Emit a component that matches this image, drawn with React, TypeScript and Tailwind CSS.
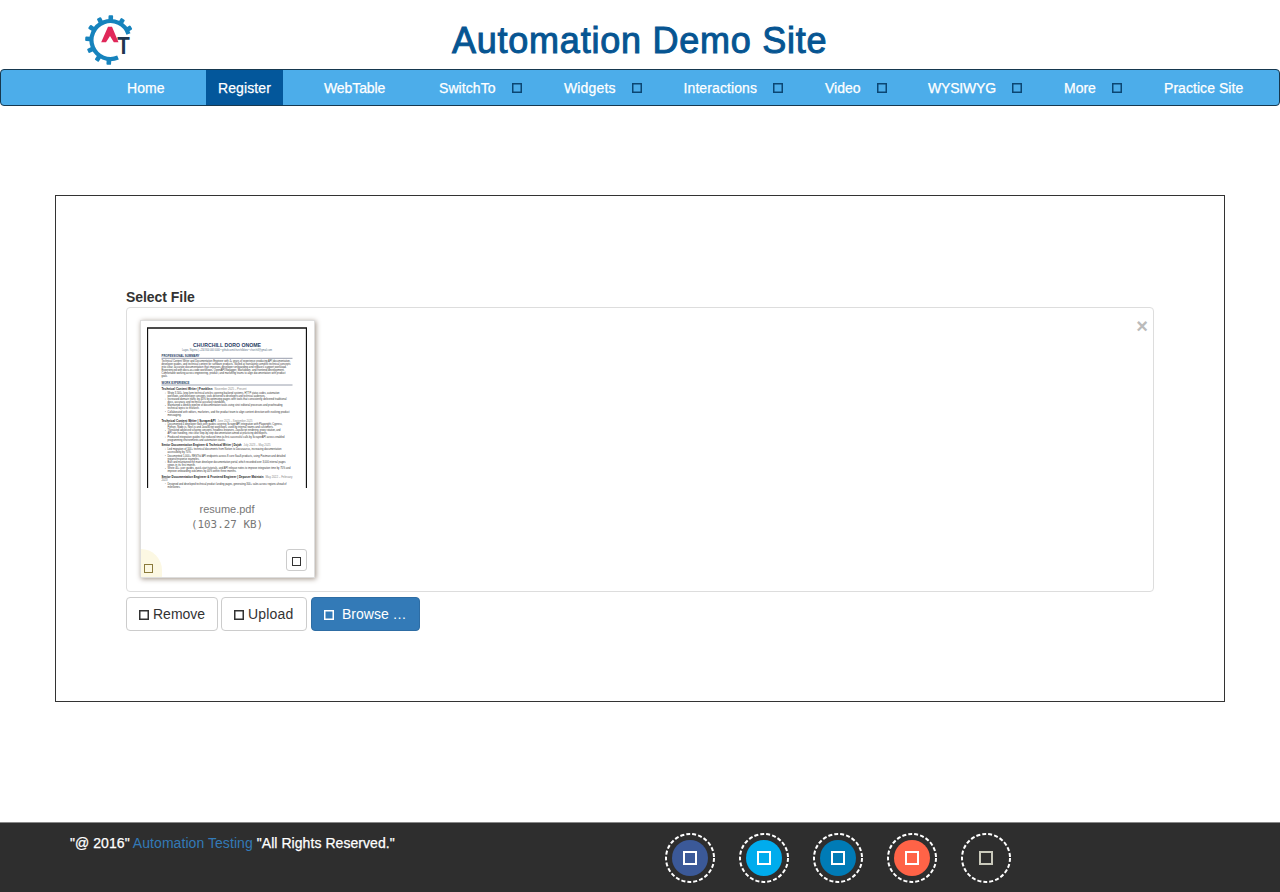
const square = 'inline-block shrink-0 border';

type NavItem = { label: string; width: string; spacing: string; menu?: boolean };

const navItems: NavItem[] = [
  { label: 'WebTable', width: 'w-[115px]', spacing: 'tracking-[-0.1px]' },
  { label: 'SwitchTo', width: 'w-[125px]', spacing: 'tracking-[0.08px]', menu: true },
  { label: 'Widgets', width: 'w-[119.5px]', spacing: 'tracking-[0.15px]', menu: true },
  { label: 'Interactions', width: 'w-[141.5px]', spacing: 'tracking-[0.1px]', menu: true },
  { label: 'Video', width: 'w-[103px]', spacing: 'tracking-[0px]', menu: true },
  { label: 'WYSIWYG', width: 'w-[136px]', spacing: 'tracking-[-0.2px]', menu: true },
  { label: 'More', width: 'w-[100px]', spacing: 'tracking-[0px]', menu: true },
  { label: 'Practice Site', width: 'w-[90px]', spacing: 'tracking-[0.05px]' },
];

const socials = ['bg-[#3b5998]', 'bg-[#00aced]', 'bg-[#007bb6]', 'bg-[#ff6347]', 'bg-transparent'];

function Logo() {
  const teeth = [-58, -31, -88, -117, -147, -177, -207, -237, -267];
  return (
    <svg width="52" height="54" viewBox="84 13 52 54" className="block">
      <path d="M128.5 34 A19 19 0 1 0 118 57.5" fill="none" stroke="#1683bd" strokeWidth="4.2" />
      {teeth.map((a) => (
        <rect key={a} x="19" y="-2.3" width="5.8" height="4.6" rx="1" fill="#1683bd" transform={`translate(110 40) rotate(${a})`} />
      ))}
      <path d="M101.2 42.3 L108 26.8 H112 L118.5 42.3 H113.8 L110 36 L106 42.3 Z" fill="#e0285a" />
      <text x="117.3" y="54.3" fontSize="23.5" fontWeight="700" fontFamily="Liberation Sans, sans-serif" fill="#20364f" textLength="12.5" lengthAdjust="spacingAndGlyphs">T</text>
    </svg>
  );
}

type Line = [y: number, x: number, w: number, text: string];

const body: Line[] = [
  [362, 161.5, 129, 'Technical Content Writer and Documentation Engineer with 4+ years of experience producing API documentation,'],
  [365, 161.5, 129, 'developer guides, and technical content for software products. Skilled at translating complex technical concepts'],
  [368, 161.5, 125, 'into clear, accurate documentation that improves developer onboarding and reduces support workload.'],
  [371, 161.5, 123, 'Experienced with docs-as-code workflows, OpenAPI/Swagger, Markdown, and frontend development.'],
  [374, 161.5, 124, 'Comfortable working across engineering, product, and marketing teams to align documentation with product'],
  [377, 161.5, 6, 'goals.'],
  [394, 167.5, 112, 'Wrote 3,500+ long-form technical articles covering backend systems, HTTP status codes, automation'],
  [397, 167.5, 98, 'workflows, and developer concepts, tools delivered to developers and technical audiences.'],
  [400, 167.5, 119, 'Increased domain traffic by 40% by optimizing pages with tools that consistently delivered traditional'],
  [403, 167.5, 58, 'docs, accuracy, and technical accuracy standards.'],
  [406.3, 167.5, 115, 'Maintained a weekly pipeline of documentation tasks using strict editorial processes and proofreading'],
  [409.3, 167.5, 32, 'technical topics to research.'],
  [412.7, 167.5, 122, 'Collaborated with editors, marketers, and the product team to align content direction with evolving product'],
  [415.7, 167.5, 14, 'messaging.'],
  [425, 167.5, 115, 'Documented 4 developer tools with guides covering ScraperAPI integration with Playwright, Cypress,'],
  [428, 167.5, 106, 'Python, Node.js, Next.js and JavaScript workflows, used by internal teams and customers.'],
  [431.3, 167.5, 113, 'Translated advanced scraping concepts, headless browsers, JavaScript rendering, proxy rotation, and'],
  [434.3, 167.5, 100, 'API rate handling, into clear step-by-step documentation aimed at practicing developers.'],
  [438, 167.5, 117, 'Produced integration guides that reduced time-to-first-successful calls by ScraperAPI across enabled'],
  [441, 167.5, 58, 'programming environments and automation stacks.'],
  [450, 167.5, 114, 'Led migration of 100+ technical documents from Notion to Docusaurus, increasing documentation'],
  [453, 167.5, 24, 'accessibility by 70%.'],
  [456.7, 167.5, 118, 'Documented 1,000+ RESTful API endpoints across 8 core SaaS products, using Postman and detailed'],
  [459.7, 167.5, 32, 'request/response examples.'],
  [463, 167.5, 118, 'Built and maintained the main developer documentation portal, which recorded over 3,000 internal pages'],
  [466, 167.5, 28, 'views in its first month.'],
  [469.3, 167.5, 123, 'Wrote 40+ user guides, quick-start tutorials, and API release notes to improve integration time by 75% and'],
  [472.3, 167.5, 69, 'improve onboarding outcomes by 40% within three months.'],
  [484.5, 167.5, 119, 'Designed and developed technical product landing pages, generating 300+ sales across regions ahead of'],
  [487.5, 167.5, 13, 'milestones.'],
];

const jobs: [number, number, string, number, string][] = [
  [390, 51, 'Technical Content Writer  |  Franklinn', 32, 'November 2025 – Present'],
  [421.5, 54, 'Technical Content Writer  |  ScraperAPI', 35, 'June 2025 – September 2025'],
  [446.3, 80, 'Senior Documentation Engineer & Technical Writer  |  Dojah', 27, 'July 2023 – May 2025'],
  [478, 102, 'Senior Documentation Engineer & Frontend Engineer  |  Deposer Maintain', 27, 'May 2022 – February'],
];

const bullets = [394, 400, 406.3, 412.7, 425, 431.3, 438, 450, 456.7, 463, 469.3, 484.5];

function DocumentPreview() {
  return (
    <svg width="160" height="161" viewBox="147 327 160 161" className="block" fontFamily="Liberation Sans, sans-serif">
      <path d="M147.5 488 V328 H306.5 V488" fill="none" stroke="#111" strokeWidth="1.3" />
      <text x="193" y="346.5" fontSize="5.2" fontWeight="700" fill="#283c65" textLength="68" lengthAdjust="spacingAndGlyphs">CHURCHILL DORO ONOME</text>
      <text x="182" y="350.5" fontSize="2.6" fill="#566d83" textLength="90" lengthAdjust="spacingAndGlyphs">Lagos, Nigeria | +234 800 000 0000  •  github.com/churchilldoro  •  churchill@gmail.com</text>
      <g fontSize="3.2" fontWeight="700" fill="#283c65">
        <text x="161.5" y="356.7" textLength="38" lengthAdjust="spacingAndGlyphs">PROFESSIONAL SUMMARY</text>
        <text x="161.5" y="383.7" textLength="28" lengthAdjust="spacingAndGlyphs">WORK EXPERIENCE</text>
      </g>
      <path d="M161.5 358.3 H292.5 M161.5 385 H292.5" stroke="#626980" strokeWidth="0.65" />
      <g fontSize="2.7" fill="#333">
        {body.map(([y, x, w, text]) => (
          <text key={y} x={x} y={y} textLength={w} lengthAdjust="spacingAndGlyphs">{text}</text>
        ))}
        <text x="161.5" y="481" fill="#666">2023</text>
      </g>
      {jobs.map(([y, w, title, dateWidth, date]) => (
        <g key={y} fontSize="2.8">
          <text x="161.5" y={y} fontWeight="700" fill="#222" textLength={w} lengthAdjust="spacingAndGlyphs">{title}</text>
          <text x={161.5 + w + 2} y={y} fill="#888" textLength={dateWidth} lengthAdjust="spacingAndGlyphs">{date}</text>
        </g>
      ))}
      {bullets.map((y) => <circle key={y} cx="165.2" cy={y - 1} r="0.35" fill="#555" />)}
    </svg>
  );
}

export default function App() {
  return (
    <div className="flex h-[892px] w-[1280px] flex-col overflow-hidden bg-white font-['Liberation_Sans',sans-serif] text-[14px] leading-5 text-[#333]">
      <header className="grid h-[69px] shrink-0 grid-cols-[368px_376px] pl-[84px]">
        <div className="pt-[13px]"><Logo /></div>
        <h1 className="whitespace-nowrap pt-[21px] text-[36px] leading-[40px] tracking-[0.76px] text-[#065592] [-webkit-text-stroke:1px_#065592]">Automation Demo Site</h1>
      </header>

      <nav className="flex h-[37px] shrink-0 items-stretch rounded-[4px] border border-[#16384f] bg-[#4cadea] pl-[126px] text-white [-webkit-text-stroke:0.25px_white]">
        <a className="flex w-[79px] items-center pt-px tracking-[0.1px]">Home</a>
        <a className="mr-[41px] flex w-[77px] items-center bg-[#03579b] pt-px pl-[12px] tracking-[0.1px]">Register</a>
        {navItems.map((item) => (
          <a key={item.label} className={`flex shrink-0 items-center whitespace-nowrap pt-px ${item.width} ${item.spacing}`}>
            {item.label}
            {item.menu && <i className={`${square} ml-[16px] h-[10px] w-[10px] border-[#0b4673] shadow-[inset_0_0_0_0.5px_#0b4673]`} />}
          </a>
        ))}
      </nav>

      <main className="mx-[55px] mt-[89px] flex h-[507px] shrink-0 flex-col border border-[#333] px-[70px] pt-[91px]">
        <label className="h-[20px] font-bold tracking-[-0.05px]">Select File</label>
        <section className="flex h-[285px] items-start justify-between rounded-[4px] border border-[#ddd] pr-[5px] pl-[13px]">
          <figure className="mt-[12px] flex h-[258px] w-[175px] flex-col items-start border border-[#ddd] pt-[6px] pl-[6px] shadow-[1px_1px_5px_0_#a2958a]">
            <DocumentPreview />
            <figcaption className="flex w-[160px] flex-col items-center pt-[13px] text-[11px] leading-[16px] text-[#777]">
              <span>resume.pdf</span>
              <span className="font-['DejaVu_Sans_Mono',monospace] text-[10.9px]">(103.27 KB)</span>
            </figcaption>
            <div className="mt-auto -ml-[6px] flex w-[173px] items-end justify-between pr-[7px]">
              <span className="flex h-[28px] w-[21px] items-end rounded-tr-[22px] bg-[#fcf8e3] pb-[4px] pl-[3px]">
                <i className={`${square} h-[9px] w-[9px] border-[#8a7a3b]`} />
              </span>
              <button className="mb-[6px] flex h-[22px] w-[21px] items-center justify-center rounded-[3px] border border-[#ccc]">
                <i className={`${square} mt-[2px] h-[9px] w-[9px] border-[#333]`} />
              </button>
            </div>
          </figure>
          <button className="mt-[8px] text-[20px] leading-[20px] font-bold text-[#bbb]">×</button>
        </section>
        <div className="mt-[5px] flex h-[34px] gap-[4px] text-[14px]">
          <button className="flex w-[92px] items-center gap-[4px] rounded-[4px] border border-[#ccc] pl-[12px]">
            <i className={`${square} mt-[2px] h-[10px] w-[10px] border-[#333] shadow-[inset_0_0_0_0.5px_#333]`} />
            <span>Remove</span>
          </button>
          <button className="-ml-px flex w-[86px] items-center gap-[4px] rounded-[4px] border border-[#ccc] pl-[12px]">
            <i className={`${square} mt-[2px] h-[10px] w-[10px] border-[#333] shadow-[inset_0_0_0_0.5px_#333]`} />
            <span className="tracking-[0.2px]">Upload</span>
          </button>
          <button className="flex w-[109px] items-center gap-[8px] rounded-[4px] border border-[#2e6da4] bg-[#337ab7] pl-[12px] text-white">
            <i className={`${square} mt-[2px] h-[10px] w-[10px] border-white shadow-[inset_0_0_0_0.5px_white]`} />
            Browse …
          </button>
        </div>
      </main>

      <footer className="mt-auto flex h-[70px] shrink-0 justify-between border-t border-[#888] bg-[#2e2e2e] pr-[269px] pl-[70px] text-white">
        <p className="pt-[10px] tracking-[0.06px] [-webkit-text-stroke:0.25px_white]">
          "@ 2016" <a className="text-[#337ab7] [-webkit-text-stroke:0px]">Automation Testing</a> "All Rights Reserved."
        </p>
        <div className="flex gap-[24px] pt-[10px]">
          {socials.map((color, i) => (
            <a key={color} className="grid h-[50px] w-[50px] place-items-center">
              <svg viewBox="0 0 50 50" className="col-start-1 row-start-1 h-[50px] w-[50px]">
                <circle cx="25" cy="25" r="24" fill="none" stroke="white" strokeWidth="2" strokeDasharray="4 2.031" />
              </svg>
              <span className={`col-start-1 row-start-1 flex h-[36px] w-[36px] items-center justify-center rounded-full ${color}`}>
                <i className={`${square} h-[14px] w-[14px] border-2 ${i === 4 ? 'border-[#c9c9bb]' : 'border-white'}`} />
              </span>
            </a>
          ))}
        </div>
      </footer>
    </div>
  );
}
